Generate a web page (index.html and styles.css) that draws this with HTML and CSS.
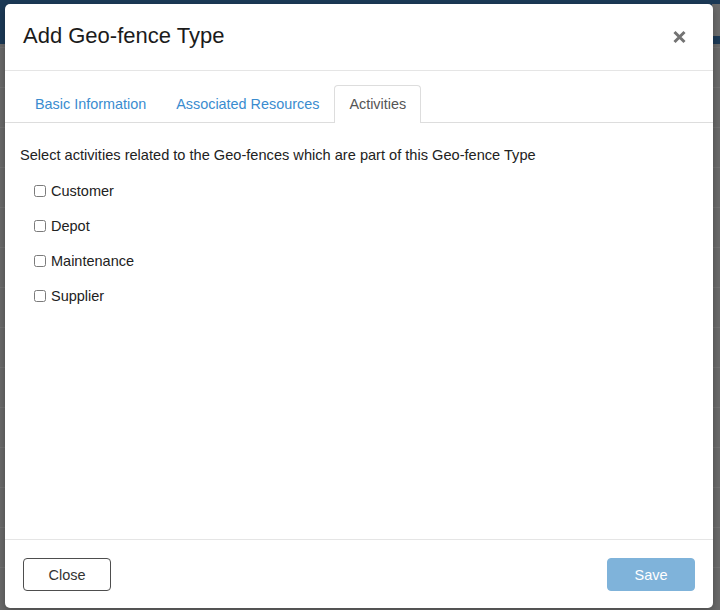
FILE: index.html
```html
<!DOCTYPE html>
<html lang="en">
<head>
<meta charset="utf-8">
<title>Add Geo-fence Type</title>
<link rel="stylesheet" href="styles.css">
</head>
<body>
<div class="page">
  <div class="navbar"><div class="navbar-side"></div></div>
  <div class="rows"></div>
</div>
<div class="modal">
  <div class="modal-header">
    <h1 class="modal-title">Add Geo-fence Type</h1>
    <button class="close" aria-label="Close">
      <svg width="15" height="14" viewBox="0 0 15 14"><path d="M2.5 2 L12.5 12 M12.5 2 L2.5 12" stroke="#737373" stroke-width="3" fill="none"/></svg>
    </button>
  </div>
  <ul class="tabs">
    <li class="tab">Basic Information</li>
    <li class="tab">Associated Resources</li>
    <li class="tab active">Activities</li>
  </ul>
  <div class="modal-body">
    <p class="intro">Select activities related to the Geo-fences which are part of this Geo-fence Type</p>
    <ul class="checks">
      <li class="check"><span class="box"></span>Customer</li>
      <li class="check"><span class="box"></span>Depot</li>
      <li class="check"><span class="box"></span>Maintenance</li>
      <li class="check"><span class="box"></span>Supplier</li>
    </ul>
  </div>
  <div class="modal-footer">
    <button class="btn btn-default">Close</button>
    <button class="btn btn-primary" disabled>Save</button>
  </div>
</div>
</body>
</html>
```
FILE: styles.css
```css
* { box-sizing: border-box; }
html, body { margin: 0; padding: 0; }
body {
  width: 720px;
  height: 610px;
  overflow: hidden;
  font-family: "Liberation Sans", Arial, Helvetica, sans-serif;
  background: #6a6a6a;
  position: relative;
}
.page { height: 610px; display: flex; flex-direction: column; }
.navbar {
  height: 44px;
  background: #1c3a57;
  display: flex;
  justify-content: flex-end;
}
.navbar-side {
  width: 8px;
  height: 32px;
  margin-top: 4px;
  background: #6c6c6c;
}
.rows {
  flex: 1;
  background-image: repeating-linear-gradient(to bottom, transparent 0, transparent 11px, #737373 11px, #737373 12px, transparent 12px, transparent 40px);
  background-position: 0 -8px;
}
.modal {
  position: absolute;
  left: 5px;
  top: 4px;
  width: 708px;
  height: 604px;
  background: #fff;
  border-radius: 5px;
  display: flex;
  flex-direction: column;
  box-shadow: 0 3px 9px rgba(0,0,0,0.3);
}
.modal-header {
  display: flex;
  align-items: center;
  justify-content: space-between;
  padding: 14px 26px 17px 18px;
  border-bottom: 1px solid #e5e5e5;
}
.modal-title {
  margin: 0;
  font-size: 22px;
  line-height: 35px;
  font-weight: normal;
  color: #1b1b1b;
}
.close {
  border: 0;
  background: none;
  padding: 0;
  margin-top: 2px;
  width: 15px;
  height: 14px;
  display: block;
}
.close svg { display: block; }
.tabs {
  list-style: none;
  margin: 14px 0 0;
  padding: 0 0 0 15px;
  display: flex;
  border-bottom: 1px solid #dddddd;
}
.tab {
  font-size: 14.4px;
  line-height: 20px;
  padding: 8px 14px;
  border: 1px solid transparent;
  border-bottom: 0;
  border-radius: 4px 4px 0 0;
  color: #3a8ccf;
  margin-bottom: -1px;
}
.tab.active {
  color: #555555;
  border-color: #dddddd;
  background: #fff;
  padding-bottom: 9px;
}
.modal-body {
  flex: 1;
  padding: 22px 15px 0;
}
.intro {
  margin: 0;
  font-size: 14.6px;
  line-height: 20px;
  color: #222;
}
.checks {
  list-style: none;
  margin: 16px 0 0;
  padding: 0 0 0 14px;
  display: flex;
  flex-direction: column;
  gap: 15px;
}
.check {
  display: flex;
  align-items: center;
  font-size: 14.5px;
  line-height: 20px;
  color: #222;
}
.box {
  width: 12px;
  height: 12px;
  border: 1px solid #7b7b7b;
  border-radius: 2.5px;
  background: #fff;
  margin-right: 5px;
  flex: none;
}
.modal-footer {
  border-top: 1px solid #e5e5e5;
  padding: 18px 18px 17px;
  display: flex;
  justify-content: space-between;
}
.btn {
  width: 88px;
  height: 33px;
  font-family: inherit;
  font-size: 14.5px;
  border-radius: 4px;
  padding: 0;
}
.btn-default {
  background: #fff;
  border: 1px solid #4e4e4e;
  color: #333;
}
.btn-primary {
  background: #7fb3da;
  border: 1px solid #7fb3da;
  color: #fff;
}
```
